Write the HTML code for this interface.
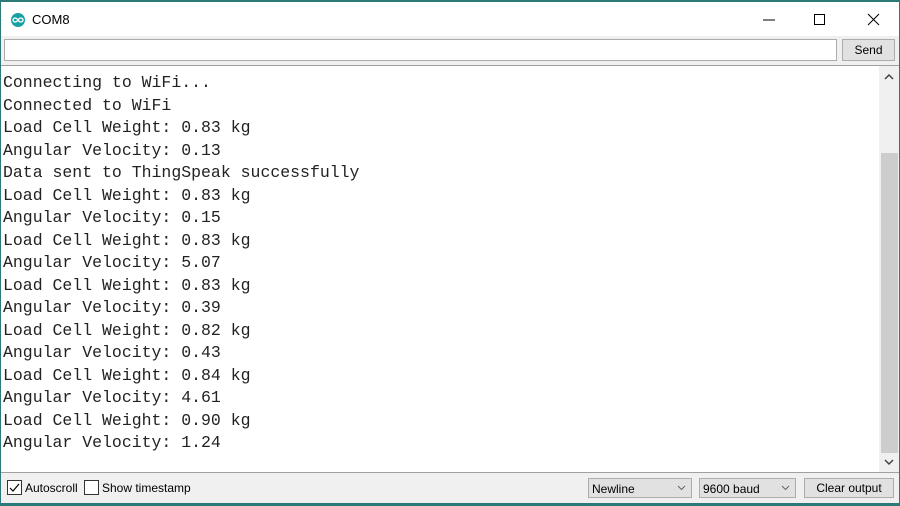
<!DOCTYPE html>
<html><head><style>
*{margin:0;padding:0;box-sizing:border-box}
body{width:900px;height:506px;overflow:hidden;background:#f0f0f0;font-family:"Liberation Sans",sans-serif;position:relative}
.top{position:absolute;left:0;top:0;width:900px;height:2px;background:#2b7a78}
.bot{position:absolute;left:0;top:503px;width:900px;height:3px;background:#2b7a78}
.lb{position:absolute;left:0;top:0;width:1px;height:506px;background:#2b7a78}
.rb{position:absolute;right:0;top:0;width:1px;height:506px;background:#2b7a78}
.title{position:absolute;left:1px;top:2px;width:898px;height:34px;background:#fff}
.t{position:absolute;left:31px;top:10px;font-size:13px;color:#000}
.logo{position:absolute;left:10px;top:11px;width:14px;height:14px;border-radius:50%;background:#17a1a5}
.inp{position:absolute;left:4px;top:39px;width:833px;height:22px;background:#fff;border:1px solid #adadad}
.btn{position:absolute;border:1px solid #adadad;background:#e1e1e1;font-size:12px;text-align:center;color:#000}
.out{position:absolute;left:1px;top:65px;width:898px;height:408px;background:#fff;border-top:1px solid #a0a0a0;border-bottom:1px solid #a0a0a0}
pre{position:absolute;left:2px;top:6px;font-family:"Liberation Mono",monospace;font-size:16.5px;line-height:22.5px;color:#222}
.sb{position:absolute;left:878px;top:0;width:20px;height:406px;background:#f0f0f0}
.th{position:absolute;left:880px;top:87px;width:17px;height:300px;background:#cdcdcd}
.chk{position:absolute;top:480px;width:15px;height:15px;border:1px solid #333;background:#fff}
.lbl{position:absolute;top:481px;font-size:12px;color:#000}
.sel{position:absolute;top:478px;height:20px;border:1px solid #adadad;background:#e1e1e1;font-size:12px;padding:3px 0 0 3px}
.ar{position:absolute;right:5px;top:6px}
</style></head><body>
<div class="title"><div class="logo"><svg width="14" height="14"><path d="M7 7c-1-1.5-2-2-3-2s-2 1-2 2 1 2 2 2 2-.5 3-2c1-1.5 2-2 3-2s2 1 2 2-1 2-2 2-2-.5-3-2z" fill="none" stroke="#fff" stroke-width="1.3"/></svg></div><div class="t">COM8</div>
<svg style="position:absolute;left:760px;top:9px" width="130" height="18"><line x1="2" y1="9" x2="14" y2="9" stroke="#000"/><rect x="53.5" y="3.5" width="10" height="10" fill="none" stroke="#000"/><path d="M107 3l11 11M118 3l-11 11" stroke="#000"/></svg></div>
<div class="inp"></div>
<div class="btn" style="left:842px;top:39px;width:53px;height:22px;line-height:20px">Send</div>
<div class="out">
<pre>Connecting to WiFi...
Connected to WiFi
Load Cell Weight: 0.83 kg
Angular Velocity: 0.13
Data sent to ThingSpeak successfully
Load Cell Weight: 0.83 kg
Angular Velocity: 0.15
Load Cell Weight: 0.83 kg
Angular Velocity: 5.07
Load Cell Weight: 0.83 kg
Angular Velocity: 0.39
Load Cell Weight: 0.82 kg
Angular Velocity: 0.43
Load Cell Weight: 0.84 kg
Angular Velocity: 4.61
Load Cell Weight: 0.90 kg
Angular Velocity: 1.24</pre>
<div class="sb"></div><div class="th"></div>
<svg style="position:absolute;left:882px;top:6px" width="12" height="10"><path d="M2 7l4-4 4 4" fill="none" stroke="#444" stroke-width="1.5"/></svg>
<svg style="position:absolute;left:882px;top:391px" width="12" height="10"><path d="M2 3l4 4 4-4" fill="none" stroke="#444" stroke-width="1.5"/></svg>
</div>
<div class="chk" style="left:7px"><svg width="13" height="13"><path d="M2 7l3 3 6-7" fill="none" stroke="#000" stroke-width="1.2"/></svg></div>
<div class="lbl" style="left:25px">Autoscroll</div>
<div class="chk" style="left:84px"></div>
<div class="lbl" style="left:102px">Show timestamp</div>
<div class="sel" style="left:588px;width:104px">Newline<svg class="ar" width="9" height="6"><path d="M1 1l3.5 3.5L8 1" fill="none" stroke="#666"/></svg></div>
<div class="sel" style="left:699px;width:97px">9600 baud<svg class="ar" width="9" height="6"><path d="M1 1l3.5 3.5L8 1" fill="none" stroke="#666"/></svg></div>
<div class="btn" style="left:804px;top:478px;width:90px;height:20px;line-height:18px">Clear output</div>
<div class="top"></div><div class="bot"></div><div class="lb"></div><div class="rb"></div>
</body></html>
